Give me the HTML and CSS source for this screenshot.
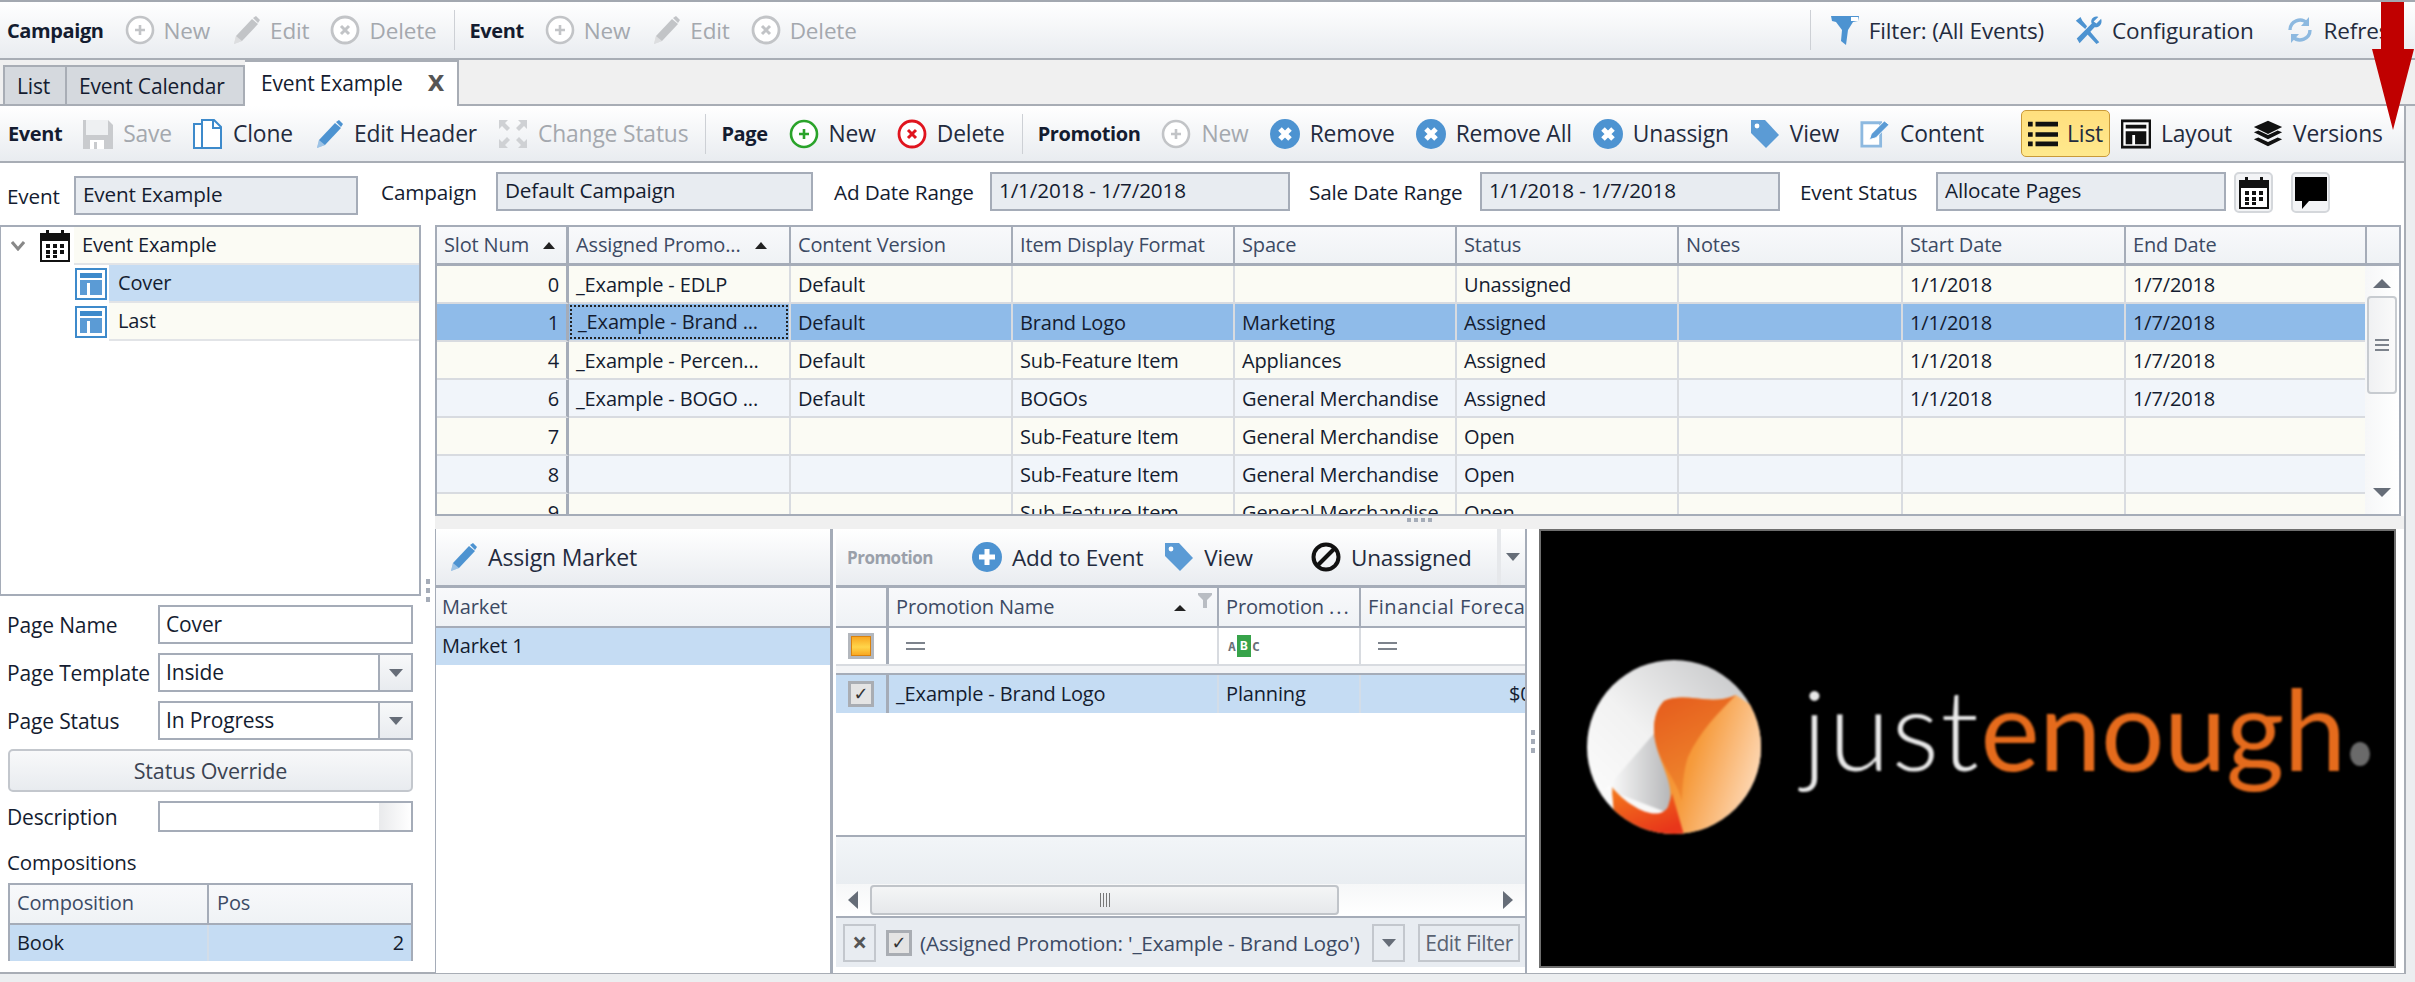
FILE: index.html
```html
<!DOCTYPE html>
<html>
<head>
<meta charset="utf-8">
<title>Event Example</title>
<link rel="stylesheet" href="styles.css">
</head>
<body>
<svg class="defs" width="0" height="0">
  <symbol id="i-plus" viewBox="0 0 30 30"><circle cx="15" cy="15" r="13" fill="#fff" stroke="currentColor" stroke-width="2.6"/><path d="M15 10v10M10 15h10" stroke="currentColor" stroke-width="2.6"/></symbol>
  <symbol id="i-x" viewBox="0 0 30 30"><circle cx="15" cy="15" r="13" fill="#fff" stroke="currentColor" stroke-width="2.8"/><path d="M11 11l8 8M19 11l-8 8" stroke="currentColor" stroke-width="3"/></symbol>
  <symbol id="i-pencil" viewBox="0 0 30 30"><path d="M3 29l2-8L21 4l6 5-16 17z" fill="currentColor"/><path d="M22 3l3-2 4 4-2 3z" fill="currentColor"/><path d="M3 29l2-8 6 5z" fill="#fff" opacity=".45"/></symbol>
  <symbol id="i-save" viewBox="0 0 30 30"><path d="M0 1h25l5 5v24H0z" fill="#c9cbce"/><rect x="3" y="1" width="22" height="15" fill="#eef0f2"/><rect x="7" y="21" width="14" height="9" fill="#fff"/><rect x="11" y="23" width="3" height="7" fill="#c9cbce"/></symbol>
  <symbol id="i-clone" viewBox="0 0 30 30"><path d="M1 5h11v24H1z" fill="#fff" stroke="#3d8acb" stroke-width="2"/><path d="M9 1h12l7 7v21H9z" fill="#fff" stroke="#3d8acb" stroke-width="2"/><path d="M20 1v8h8" fill="none" stroke="#3d8acb" stroke-width="2"/></symbol>
  <symbol id="i-expand" viewBox="0 0 30 30"><path d="M1 1h9l-3 3 5 5-3 3-5-5-3 3zM29 1v9l-3-3-5 5-3-3 5-5-3-3zM1 29v-9l3 3 5-5 3 3-5 5 3 3zM29 29h-9l3-3-5-5 3-3 5 5 3-3z" fill="#cfd1d4"/></symbol>
  <symbol id="i-xdisc" viewBox="0 0 30 30"><circle cx="15" cy="15" r="15" fill="#4d93d1"/><path d="M10 10l10 10M20 10L10 20" stroke="#fff" stroke-width="5"/></symbol>
  <symbol id="i-plusdisc" viewBox="0 0 30 30"><circle cx="15" cy="15" r="15" fill="#4d93d1"/><path d="M15 7v16M7 15h16" stroke="#fff" stroke-width="5"/></symbol>
  <symbol id="i-tag" viewBox="0 0 30 30"><path d="M1 1h14l14 15-13 13L1 14z" fill="#5b9bd5"/><circle cx="7" cy="7" r="2.4" fill="#fff"/></symbol>
  <symbol id="i-content" viewBox="0 0 32 30"><path d="M2 3h20v25H2z" fill="#fff" stroke="#8db9e0" stroke-width="3"/><path d="M10 21l2-6L26 1l5 4-14 14z" fill="#5b9bd5" stroke="#fff"/></symbol>
  <symbol id="i-list" viewBox="0 0 32 30"><path d="M0 2h5v5H0zM0 13h5v5H0zM0 23h5v5H0z" fill="#111"/><path d="M8 2h24v5H8zM8 13h24v5H8zM8 23h24v5H8z" fill="#111"/></symbol>
  <symbol id="i-layout" viewBox="0 0 32 30"><rect x="1" y="1" width="30" height="28" fill="#fff" stroke="#111" stroke-width="3"/><path d="M5 5h22v4H5zM5 12h22v4H5zM5 16h7v10H5zM15 16h12v10H15z" fill="#111"/></symbol>
  <symbol id="i-layers" viewBox="0 0 34 30"><path d="M17 0l16 7-16 8L1 7z" fill="#111"/><path d="M1 13l5-2 11 5 11-5 5 2-16 8z" fill="#111"/><path d="M1 21l5-2 11 5 11-5 5 2-16 8z" fill="#111"/></symbol>
  <symbol id="i-funnel" viewBox="0 0 28 30"><path d="M0 1h28l-1 5-5 1-5 8-2 15-5-4 1-11L5 7 1 6z" fill="#4d93d1"/><path d="M20 2h7v4h-7z" fill="#fff"/></symbol>
  <symbol id="i-wrench" viewBox="0 0 32 30"><path d="M3 5l5-4 2 4 5 6-2 3zM28 28l-3 2-12-13 3-3z" fill="#4d93d1"/><path d="M30 3l-5 5-3-2 5-5c-5-2-9 3-7 7L4 24l3 5 16-17c4 1 9-3 7-9z" fill="#4d93d1"/></symbol>
  <symbol id="i-refresh" viewBox="0 0 30 30"><path d="M5 15A10 10 0 0 1 22 8" fill="none" stroke="#8db9e0" stroke-width="3.4"/><path d="M25 15A10 10 0 0 1 8 22" fill="none" stroke="#8db9e0" stroke-width="3.4"/><path d="M24 2v9h-8zM6 28v-9h8z" fill="#8db9e0"/></symbol>
  <symbol id="i-cal" viewBox="0 0 30 32"><rect x="1" y="4" width="28" height="27" fill="#fff" stroke="#111" stroke-width="2"/><path d="M1 5h28v6H1zM6 0h3v6H6zM21 0h3v6h-3z" fill="#111"/><path d="M6 14h4v4H6zM13 14h4v4h-4zM20 14h4v4h-4zM6 20h4v4H6zM13 20h4v4h-4zM20 20h4v4h-4zM6 25h4v3H6zM13 25h4v3h-4z" fill="#111"/></symbol>
  <symbol id="i-comment" viewBox="0 0 32 32"><path d="M0 0h32v24H14l-7 8v-8H0z" fill="#000"/></symbol>
  <symbol id="i-panel" viewBox="0 0 32 32"><rect x="1" y="1" width="30" height="30" fill="#fff" stroke="#3d8acb" stroke-width="2"/><path d="M5 5h22v5H5z" fill="#3d8acb"/><path d="M5 12h22v3H5zM5 15h7v12H5zM15 15h12v12H15z" fill="#5b9bd5"/></symbol>
  <symbol id="i-ban" viewBox="0 0 30 30"><circle cx="15" cy="15" r="12.5" fill="none" stroke="#111" stroke-width="4"/><path d="M7 23L23 7" stroke="#111" stroke-width="4"/></symbol>
</svg>

<div class="arrow"><svg width="42" height="130" viewBox="0 0 42 130"><path d="M9 0h23v49h10L21 130 0 49h9z" fill="#c00000"/></svg></div>

<div class="bar topbar">
  <b class="group">Campaign</b>
  <span class="tool off"><svg class="ico"><use href="#i-plus"/></svg>New</span>
  <span class="tool off"><svg class="ico"><use href="#i-pencil"/></svg>Edit</span>
  <span class="tool off"><svg class="ico"><use href="#i-x"/></svg>Delete</span>
  <i class="sep"></i>
  <b class="group">Event</b>
  <span class="tool off"><svg class="ico"><use href="#i-plus"/></svg>New</span>
  <span class="tool off"><svg class="ico"><use href="#i-pencil"/></svg>Edit</span>
  <span class="tool off"><svg class="ico"><use href="#i-x"/></svg>Delete</span>
  <i class="sep push"></i>
  <span class="tool t-filter"><svg class="ico"><use href="#i-funnel"/></svg>Filter: (All Events)</span>
  <span class="tool t-config"><svg class="ico"><use href="#i-wrench"/></svg>Configuration</span>
  <span class="tool"><svg class="ico"><use href="#i-refresh"/></svg>Refresh</span>
</div>

<div class="tabs">
  <span class="tab tab-list">List</span>
  <span class="tab tab-cal">Event Calendar</span>
  <span class="tab tab-on">Event Example<b class="tab-x">X</b></span>
</div>

<div class="main">
  <div class="bar toolbar">
    <b class="group">Event</b>
    <span class="tool off"><svg class="ico"><use href="#i-save"/></svg>Save</span>
    <span class="tool"><svg class="ico"><use href="#i-clone"/></svg>Clone</span>
    <span class="tool blue"><svg class="ico"><use href="#i-pencil"/></svg>Edit Header</span>
    <span class="tool off"><svg class="ico"><use href="#i-expand"/></svg>Change Status</span>
    <i class="sep"></i>
    <b class="group">Page</b>
    <span class="tool green"><svg class="ico"><use href="#i-plus"/></svg>New</span>
    <span class="tool red"><svg class="ico"><use href="#i-x"/></svg>Delete</span>
    <i class="sep"></i>
    <b class="group">Promotion</b>
    <span class="tool off"><svg class="ico"><use href="#i-plus"/></svg>New</span>
    <span class="tool"><svg class="ico"><use href="#i-xdisc"/></svg>Remove</span>
    <span class="tool"><svg class="ico"><use href="#i-xdisc"/></svg>Remove All</span>
    <span class="tool"><svg class="ico"><use href="#i-xdisc"/></svg>Unassign</span>
    <span class="tool"><svg class="ico"><use href="#i-tag"/></svg>View</span>
    <span class="tool"><svg class="ico"><use href="#i-content"/></svg>Content</span>
    <span class="tool view-on"><svg class="ico"><use href="#i-list"/></svg>List</span>
    <span class="tool"><svg class="ico"><use href="#i-layout"/></svg>Layout</span>
    <span class="tool"><svg class="ico"><use href="#i-layers"/></svg>Versions</span>
  </div>

  <div class="fields">
    <label class="fld fld-event"><span class="fl-event">Event</span><span class="ro w-event">Event Example</span></label>
    <label class="fld"><span class="fl-camp">Campaign</span><span class="ro w-camp">Default Campaign</span></label>
    <label class="fld"><span class="fl-ad">Ad Date Range</span><span class="ro w-date">1/1/2018 - 1/7/2018</span></label>
    <label class="fld"><span class="fl-sale">Sale Date Range</span><span class="ro w-date">1/1/2018 - 1/7/2018</span></label>
    <label class="fld"><span class="fl-status">Event Status</span><span class="ro w-status">Allocate Pages</span></label>
    <span class="sq"><svg class="sq-ico"><use href="#i-cal"/></svg></span>
    <span class="sq sq2"><svg class="sq-ico"><use href="#i-comment"/></svg></span>
  </div>

  <div class="body">
    <div class="left">
      <div class="tree">
        <div class="node root">
          <svg class="chev" width="14" height="10" viewBox="0 0 14 10"><path d="M1 1l6 7 6-7" fill="none" stroke="#888" stroke-width="3"/></svg>
          <svg class="node-cal"><use href="#i-cal"/></svg>
          <span class="node-txt wide">Event Example</span>
        </div>
        <div class="node">
          <svg class="node-ico"><use href="#i-panel"/></svg>
          <span class="node-txt sel">Cover</span>
        </div>
        <div class="node">
          <svg class="node-ico"><use href="#i-panel"/></svg>
          <span class="node-txt">Last</span>
        </div>
      </div>
      <div class="form">
        <div class="row"><span class="lbl">Page Name</span><span class="inp">Cover</span></div>
        <div class="row"><span class="lbl">Page Template</span><span class="inp combo">Inside<i class="drop"><i class="tri"></i></i></span></div>
        <div class="row"><span class="lbl">Page Status</span><span class="inp combo">In Progress<i class="drop"><i class="tri"></i></i></span></div>
        <div class="btn">Status Override</div>
        <div class="row desc"><span class="lbl">Description</span><span class="inp"><i class="fade"></i></span></div>
        <div class="comp-title">Compositions</div>
        <div class="comp">
          <div class="comp-h"><span class="c1">Composition</span><span class="c2">Pos</span></div>
          <div class="comp-r"><span class="c1">Book</span><span class="c2 num">2</span></div>
        </div>
      </div>
    </div>
    <div class="vsplit"><i></i><i></i><i></i></div>
    <div class="right">
      <div class="slots">
        <div class="slots-scroll">
          <table class="grid">
            <colgroup><col class="s1"><col class="s2"><col class="s2"><col class="s2"><col class="s2"><col class="s2"><col class="s4"><col class="s5"><col class="s6"></colgroup>
            <thead>
              <tr><th>Slot Num<i class="sort"></i></th><th>Assigned Promo...<i class="sort"></i></th><th>Content Version</th><th>Item Display Format</th><th>Space</th><th>Status</th><th>Notes</th><th>Start Date</th><th>End Date</th></tr>
            </thead>
            <tbody>
              <tr class="a"><td class="num">0</td><td>_Example - EDLP</td><td>Default</td><td></td><td></td><td>Unassigned</td><td></td><td>1/1/2018</td><td>1/7/2018</td></tr>
              <tr class="hit"><td class="num">1</td><td class="focus"><span>_Example - Brand ...</span></td><td>Default</td><td>Brand Logo</td><td>Marketing</td><td>Assigned</td><td></td><td>1/1/2018</td><td>1/7/2018</td></tr>
              <tr class="a"><td class="num">4</td><td>_Example - Percen...</td><td>Default</td><td>Sub-Feature Item</td><td>Appliances</td><td>Assigned</td><td></td><td>1/1/2018</td><td>1/7/2018</td></tr>
              <tr class="b"><td class="num">6</td><td>_Example - BOGO ...</td><td>Default</td><td>BOGOs</td><td>General Merchandise</td><td>Assigned</td><td></td><td>1/1/2018</td><td>1/7/2018</td></tr>
              <tr class="a"><td class="num">7</td><td></td><td></td><td>Sub-Feature Item</td><td>General Merchandise</td><td>Open</td><td></td><td></td><td></td></tr>
              <tr class="b"><td class="num">8</td><td></td><td></td><td>Sub-Feature Item</td><td>General Merchandise</td><td>Open</td><td></td><td></td><td></td></tr>
              <tr class="a"><td class="num">9</td><td></td><td></td><td>Sub-Feature Item</td><td>General Merchandise</td><td>Open</td><td></td><td></td><td></td></tr>
            </tbody>
          </table>
        </div>
        <div class="vscroll">
          <div class="vscroll-head"></div>
          <i class="tri up"></i>
          <div class="vthumb"><i></i><i></i><i></i></div>
          <i class="tri down"></i>
        </div>
      </div>
      <div class="hsplit"><i></i><i></i><i></i><i></i></div>
      <div class="lower">
        <div class="market">
          <div class="bar mbar"><span class="tool blue"><svg class="ico"><use href="#i-pencil"/></svg>Assign Market</span></div>
          <div class="m-head">Market</div>
          <div class="m-row">Market 1</div>
        </div>
        <div class="promo">
          <div class="bar pbar">
            <b class="group dim">Promotion</b>
            <span class="tool"><svg class="ico"><use href="#i-plusdisc"/></svg>Add to Event</span>
            <span class="tool"><svg class="ico"><use href="#i-tag"/></svg>View</span>
            <span class="tool push-ban"><svg class="ico"><use href="#i-ban"/></svg>Unassigned</span>
            <span class="pdrop"><i class="tri"></i></span>
          </div>
          <div class="p-grid">
            <div class="p-row p-head">
              <span class="pc0"></span>
              <span class="pc1">Promotion Name<i class="sort"></i><svg class="mini-funnel" width="14" height="15" viewBox="0 0 14 15"><path d="M0 0h14v2l-5 5v8H5V7L0 2z" fill="#b9bdc3"/></svg></span>
              <span class="pc2">Promotion <i class="dots">...</i></span>
              <span class="pc3 ff">Financial Forecast</span>
            </div>
            <div class="p-row p-filter">
              <span class="pc0"><i class="cbx amber"></i></span>
              <span class="pc1"><i class="eq"></i></span>
              <span class="pc2"><i class="abc"><i>A</i><i class="abc-b">B</i><i>C</i></i></span>
              <span class="pc3"><i class="eq"></i></span>
            </div>
            <div class="p-gap"></div>
            <div class="p-row p-sel">
              <span class="pc0"><i class="cbx">&#10003;</i></span>
              <span class="pc1">_Example - Brand Logo</span>
              <span class="pc2">Planning</span>
              <span class="pc3 money">$0</span>
            </div>
            <div class="p-empty"></div>
            <div class="p-foot"></div>
            <div class="hscroll">
              <i class="tri left-t"></i>
              <div class="hthumb"><i></i><i></i><i></i><i></i></div>
              <i class="tri right-t"></i>
            </div>
            <div class="filterbar">
              <span class="fb-x">&#215;</span>
              <i class="cbx fb-c">&#10003;</i>
              <span class="fb-txt">(Assigned Promotion: '_Example - Brand Logo')</span>
              <span class="fb-d"><i class="tri"></i></span>
              <span class="fb-edit">Edit Filter</span>
            </div>
          </div>
        </div>
        <div class="vsplit v2"><i></i><i></i><i></i></div>
        <div class="logo">
          <svg class="logo-mark" width="176" height="176" viewBox="0 0 176 176">
            <defs>
              <linearGradient id="lg-w" x1="1" y1="0" x2="0" y2="1"><stop offset="0" stop-color="#bfc0c2"/><stop offset=".55" stop-color="#f2f2f2"/><stop offset="1" stop-color="#fff"/></linearGradient>
              <linearGradient id="lg-o" x1="0" y1="0" x2="1" y2=".3"><stop offset="0" stop-color="#f07a1c"/><stop offset=".6" stop-color="#f69a3a"/><stop offset="1" stop-color="#fdd3ab"/></linearGradient>
              <linearGradient id="lg-f" x1="0" y1="0" x2=".4" y2="1"><stop offset="0" stop-color="#e55a1c"/><stop offset="1" stop-color="#f08a2e"/></linearGradient>
              <linearGradient id="lg-b" x1="0" y1="0" x2=".6" y2="1"><stop offset="0" stop-color="#f47a1c"/><stop offset="1" stop-color="#e8361a"/></linearGradient>
              <linearGradient id="lg-p" x1="0" y1="0" x2="1" y2="0"><stop offset="0" stop-color="#fff"/><stop offset="1" stop-color="#b5b6b8"/></linearGradient>
              <clipPath id="lg-c"><circle cx="88" cy="88" r="87"/></clipPath>
            </defs>
            <g clip-path="url(#lg-c)">
              <rect width="176" height="176" fill="url(#lg-w)"/>
              <path d="M20 130L72 70c4 35 20 55 10 84z" fill="url(#lg-p)"/>
              <path d="M78 42c22-10 46 6 72-6l30 20v124H30l-4-48c16 20 46 36 56 16 10-24-14-48-14-78 0-12 4-22 10-28z" fill="url(#lg-o)"/>
              <path d="M78 42c22-10 46 6 72-6-18 18-36 36-48 62-4 12-6 30-6 44-6-24-28-42-28-72 0-12 4-22 10-28z" fill="url(#lg-f)"/>
              <path d="M26 128c16 20 46 36 56 20l4-14 12 42H30z" fill="url(#lg-b)"/>
            </g>
          </svg>
          <div class="logo-word"><span class="just">just</span><span class="enough">enough</span><span class="logo-dot"></span></div>
        </div>
      </div>
    </div>
  </div>
</div>
</body>
</html>
```

FILE: styles.css
```css
html, body { margin: 0; padding: 0; }
body {
  width: 2415px;
  height: 982px;
  overflow: hidden;
  position: relative;
  background: #eceef0;
  border-top: 2px solid #a3a8b0;
  box-sizing: border-box;
  font-family: "Open Sans", "Noto Sans", sans-serif;
  font-size: 20px;
  letter-spacing: -0.15px;
  color: #141c30;
}
i { font-style: normal; }
.defs { position: absolute; }
.arrow { position: absolute; right: 1px; top: -2px; z-index: 5; line-height: 0; }

/* toolbars */
.bar {
  display: flex;
  align-items: center;
  box-sizing: border-box;
  background: linear-gradient(#fff, #e9ecf0);
  white-space: nowrap;
  font-size: 22.5px;
}
.topbar { height: 58px; padding-left: 7px; border-bottom: 2px solid #a8adb5; padding-right: 12px; }
.toolbar { height: 57px; padding-left: 8px; border-bottom: 2px solid #a8adb5; font-size: 22.8px; }
.group { font-weight: 700; font-size: 20px; letter-spacing: -0.4px; margin-right: 21px; }
.group.dim { color: #9aa0aa; }
.tool { display: flex; align-items: center; gap: 10px; margin-right: 21px; color: #232b3e; }
.tool.off { color: #a4a8ae; }
.tool.off .ico { color: #c2c4c7; }
.tool .ico { color: #4d93d1; }
.tool.green .ico { color: #2aa32a; }
.tool.red .ico { color: #e0141e; }
.ico { width: 30px; height: 30px; flex: none; }
.sep { width: 1px; height: 40px; background: #cdd0d5; margin: 0 15px 0 -4px; }
.sep.push { margin-left: auto; margin-right: 19px; }
.topbar .tool:last-child { margin-right: 0; }
.topbar .tool { gap: 9px; }
.topbar .t-filter { margin-right: 29px; }
.topbar .t-config { margin-right: 31px; }
.view-on {
  height: 47px;
  box-sizing: border-box;
  margin: 0 11px 0 16px;
  padding: 0 6px;
  gap: 9px;
  border: 1px solid #c99a3a;
  border-radius: 5px;
  background: linear-gradient(#ffdf7e, #ffe98d);
}
.toolbar .tool:last-child { margin-right: 0; }

/* tabs */
.tabs {
  display: flex;
  align-items: flex-end;
  height: 46px;
  box-sizing: border-box;
  padding-left: 3px;
  background: #f0f0f0;
  border-bottom: 2px solid #a8adb5;
  font-size: 21px;
}
.tab {
  display: flex;
  align-items: center;
  box-sizing: border-box;
  height: 39px;
  background: #d5d9de;
  border: 2px solid #a8adb5;
  border-bottom: 0;
  padding-left: 12px;
}
.tab-list { width: 64px; }
.tab-cal { width: 178px; border-left: 0; }
.tab-on {
  position: relative;
  top: 2px;
  width: 214px;
  height: 46px;
  padding-left: 16px;
  padding-bottom: 2px;
  background: #fff;
  border-left: 0;
  border-top: 2px solid #a8adb5;
}
.tab-x { margin-left: 25px; font-family: "DejaVu Sans", sans-serif; font-size: 22px; color: #555; letter-spacing: 0; }

/* main panel */
.main {
  width: 2406px;
  height: 868px;
  box-sizing: border-box;
  background: #fff;
  border-right: 2px solid #a8adb5;
  border-bottom: 2px solid #a8adb5;
}
.fields { display: flex; align-items: flex-start; height: 62px; box-sizing: border-box; padding-top: 9px; padding-left: 7px; font-size: 20.7px; }
.fld { display: flex; align-items: center; margin-right: 21px; }
.fld-event { margin-top: 4px; margin-right: 23px; }
.fl-event { width: 67px; }
.fl-camp { width: 115px; }
.fl-ad { width: 156px; }
.fl-sale { width: 171px; }
.fl-status { width: 136px; }
.ro {
  display: block;
  box-sizing: border-box;
  height: 39px;
  line-height: 33px;
  padding-left: 7px;
  background: #e8ecf1;
  border: 2px solid #a5acb8;
}
.w-event { width: 284px; }
.w-camp { width: 317px; }
.w-date { width: 300px; }
.w-status { width: 290px; }
.fld:nth-of-type(3) { margin-right: 19px; }
.fld:nth-of-type(4) { margin-right: 20px; }
.sq {
  display: flex;
  align-items: center;
  justify-content: center;
  box-sizing: border-box;
  width: 39px;
  height: 41px;
  margin-left: -13px;
  border: 2px solid #d4d7db;
  border-radius: 5px;
  background: #f3f4f6;
}
.sq2 { margin-left: 18px; }
.sq-ico { width: 32px; height: 32px; }

.body { display: flex; height: 748px; }
.left { width: 421px; flex: none; }
.vsplit { width: 14px; flex: none; display: flex; flex-direction: column; justify-content: center; align-items: center; gap: 4px; background: #fff; }
.vsplit i { width: 4px; height: 5px; background: #a5acb8; }
.body > .vsplit { justify-content: flex-start; padding-top: 354px; height: 30px; }

/* tree */
.tree {
  box-sizing: border-box;
  height: 371px;
  border: 2px solid #a5acb8;
  border-left-width: 1px;
}
.node { display: flex; align-items: center; height: 38px; padding-left: 74px; position: relative; }
.node.root { padding-left: 10px; }
.chev { flex: none; margin-right: 15px; }
.node-cal { width: 30px; height: 32px; flex: none; margin-right: 4px; }
.node-ico { width: 32px; height: 32px; flex: none; margin-right: 2px; }
.node-txt { flex: 1; height: 36px; line-height: 35px; padding-left: 9px; background: #fbfbf4; border-bottom: 2px solid #e2e4e7; }
.node-txt.sel { background: #c5dcf3; }
.node-txt.wide { padding-left: 8px; }

/* page form */
.form { padding: 9px 8px 0 0; font-size: 21px; }
.row { display: flex; align-items: center; height: 39px; margin-bottom: 9px; }
.lbl { width: 151px; padding-left: 7px; flex: none; white-space: nowrap; }
.inp {
  position: relative;
  flex: 1;
  box-sizing: border-box;
  height: 39px;
  line-height: 34px;
  padding-left: 6px;
  border: 2px solid #a5acb8;
  background: #fff;
  display: block;
}
.combo { padding-right: 33px; }
.drop {
  position: absolute;
  right: 0;
  top: 0;
  bottom: 0;
  width: 33px;
  display: flex;
  align-items: center;
  justify-content: center;
  background: linear-gradient(#f8f9fa, #e8ebef);
  border-left: 2px solid #a5acb8;
  box-sizing: border-box;
}
.tri { display: block; width: 0; height: 0; border: 7px solid transparent; border-top: 8px solid #666d78; border-bottom: 0; }
.btn {
  margin: 0 0 9px 8px;
  height: 43px;
  line-height: 40px;
  box-sizing: border-box;
  text-align: center;
  color: #3b4352;
  border: 2px solid #c3c7cd;
  border-radius: 5px;
  background: linear-gradient(#f8f9fa, #e8ebef);
  font-size: 21.5px;
}
.row.desc { height: 31px; }
.desc .inp { height: 31px; }
.fade { position: absolute; right: 0; top: 0; bottom: 0; width: 32px; background: linear-gradient(90deg, #e9eaec, #fff); }
.comp-title { padding-left: 7px; height: 42px; line-height: 42px; font-size: 20.5px; }
.comp { margin-left: 8px; border: 2px solid #a5acb8; box-sizing: border-box; height: 78px; font-size: 20px; }
.comp-h { display: flex; height: 38px; line-height: 36px; background: linear-gradient(#f8f9fb, #eff2f5); border-bottom: 2px solid #a5acb8; color: #3c4a64; }
.comp-r { display: flex; height: 36px; line-height: 35px; background: #c5dcf3; }
.c1 { width: 199px; box-sizing: border-box; padding-left: 7px; border-right: 2px solid #a5acb8; }
.comp-r .c1 { border-right-color: #d3dde8; }
.c2 { flex: 1; padding-left: 8px; }
.c2.num { text-align: right; padding-right: 7px; }

/* slot grid */
.right { flex: 1; min-width: 0; }
.slots { position: relative; height: 291px; box-sizing: border-box; border: 2px solid #a5acb8; overflow: hidden; width: 1966px; }
.slots-scroll { height: 287px; overflow: hidden; }
.grid { table-layout: fixed; border-collapse: separate; border-spacing: 0; width: 1962px; }
col.s1 { width: 132px; }
col.s2 { width: 222px; }
col.s4 { width: 224px; }
col.s5 { width: 223px; }
col.s6 { width: 273px; }
.grid th {
  box-sizing: border-box;
  height: 39px;
  padding: 0 0 2px 7px;
  text-align: left;
  font-weight: 400;
  color: #3c4a64;
  white-space: nowrap;
  background: linear-gradient(#f8f9fb, #eff2f5);
  border-right: 2px solid #a5acb8;
  border-bottom: 3px solid #a5acb8;
}
.grid th:first-child { border-right-width: 3px; }
.sort { display: inline-block; width: 0; height: 0; margin-left: 14px; vertical-align: 3px; border: 6px solid transparent; border-bottom: 7px solid #222; border-top: 0; }
.grid td {
  box-sizing: border-box;
  height: 38px;
  padding: 0 0 0 7px;
  white-space: nowrap;
  overflow: hidden;
  border-right: 2px solid #d8dbe0;
  border-bottom: 2px solid #d8dbe0;
}
.grid td.num { text-align: right; padding-right: 7px; border-right: 3px solid #a5acb8; }
.a td { background: #fbfbf4; }
.b td { background: #f1f5fa; }
.hit td { background: #8fbbe9; }
.hit td.focus { padding: 0; }
.focus span { display: block; box-sizing: border-box; height: 34px; line-height: 30px; padding-left: 6px; margin: 1px; border: 2px dotted #222; }

.vscroll { position: absolute; right: 0; top: 0; bottom: 0; width: 34px; background: linear-gradient(90deg, #f6f7f8, #fff); display: flex; flex-direction: column; align-items: center; }
.vscroll-head { align-self: stretch; height: 39px; box-sizing: border-box; background: linear-gradient(#f8f9fb, #eff2f5); border-left: 2px solid #a5acb8; border-bottom: 3px solid #a5acb8; margin-bottom: 13px; flex: none; }
.tri.up { border-top: 0; border-bottom: 9px solid #666d78; border-left-width: 9px; border-right-width: 9px; }
.vthumb { box-sizing: border-box; width: 30px; height: 98px; margin-top: 8px; border: 2px solid #c7cbd0; border-radius: 4px; background: linear-gradient(90deg, #f0f1f3, #fafafa); display: flex; flex-direction: column; align-items: center; justify-content: center; gap: 3px; flex: none; }
.vthumb i { width: 14px; height: 2px; background: #7d838c; }
.tri.down { margin-top: 94px; border-top: 9px solid #666d78; border-left-width: 9px; border-right-width: 9px; }

.hsplit { height: 13px; background: #f0f0f0; display: flex; justify-content: center; gap: 3px; padding-top: 2px; box-sizing: border-box; }
.hsplit i { width: 4px; height: 4px; background: #a5acb8; }

/* lower */
.lower { display: flex; height: 444px; background: #fff; }
.market { width: 398px; flex: none; box-sizing: border-box; border-right: 3px solid #a5acb8; border-left: 1px solid #a5acb8; }
.mbar { height: 59px; padding-left: 12px; border-bottom: 3px solid #a5acb8; }
.mbar .tool { font-size: 23px; }
.m-head { height: 40px; line-height: 38px; padding-left: 6px; box-sizing: border-box; color: #3c4a64; background: linear-gradient(#f8f9fb, #eff2f5); border-bottom: 2px solid #a5acb8; }
.m-row { height: 37px; line-height: 36px; padding-left: 6px; background: #c5dcf3; }

.promo { width: 691px; flex: none; box-sizing: border-box; margin-left: 3px; overflow: hidden; border-right: 2px solid #a5acb8; }
.pbar { height: 59px; padding-left: 11px; border-bottom: 3px solid #a5acb8; position: relative; }
.pbar .group { margin-right: 39px; font-size: 17px; letter-spacing: -0.5px; }
.pbar .push-ban { margin-left: 37px; margin-right: 0; }
.pbar .tool:nth-of-type(2) { margin-left: 0; }
.pdrop { position: absolute; right: 0; top: 0; bottom: 0; width: 28px; display: flex; align-items: center; justify-content: center; border-left: 4px solid #e6e8eb; box-sizing: border-box; }
.p-grid { position: relative; height: 383px; }
.p-row { display: flex; }
.p-row > span { box-sizing: border-box; overflow: hidden; white-space: nowrap; padding-left: 7px; }
.pc0 { width: 53px; flex: none; display: flex; align-items: center; justify-content: center; padding-left: 0 !important; border-right: 3px solid #a5acb8; }
.pc1 { width: 330px; flex: none; border-right: 2px solid #d8dbe0; position: relative; }
.pc2 { width: 142px; flex: none; border-right: 2px solid #d8dbe0; }
.pc3 { flex: 1; }
.p-head { height: 40px; line-height: 38px; box-sizing: border-box; color: #3c4a64; background: linear-gradient(#f8f9fb, #eff2f5); border-bottom: 2px solid #a5acb8; }
.p-head .pc1, .p-head .pc2 { border-right: 2px solid #a5acb8; }
.p-head .sort { position: absolute; left: 285px; top: 17px; margin: 0; border-width: 0 6px 6px; border-style: solid; border-color: transparent transparent #222; }
.mini-funnel { position: absolute; left: 309px; top: 5px; }
.dots { letter-spacing: 2px; }
.ff { letter-spacing: 0.5px; }
.p-filter { height: 38px; box-sizing: border-box; border-bottom: 2px solid #d8dbe0; align-items: stretch; }
.p-filter .pc1, .p-filter .pc3 { display: flex; align-items: center; padding-left: 17px; }
.p-filter .pc2 { display: flex; align-items: center; padding-left: 8px; }
.eq { display: block; width: 19px; height: 8px; box-sizing: border-box; border-top: 2px solid #7d838c; border-bottom: 2px solid #7d838c; }
.abc { display: flex; align-items: center; font-family: "DejaVu Sans Mono", monospace; font-size: 13px; font-weight: 700; letter-spacing: 0; color: #6a7078; }
.abc i { width: 10px; text-align: center; }
.abc .abc-b { width: 14px; height: 22px; line-height: 22px; background: #37a34a; color: #fff; }
.p-gap { height: 9px; box-sizing: border-box; background: #f3f4f6; border-bottom: 2px solid #a5acb8; }
.p-sel { height: 38px; line-height: 37px; background: #c5dcf3; }
.p-sel .pc1, .p-sel .pc2 { border-right-color: #d3dde8; }
.money { padding-left: 148px !important; }
.cbx { box-sizing: border-box; display: block; width: 26px; height: 26px; text-align: center; font-size: 18px; line-height: 20px; font-weight: 700; color: #333; background: #e4e4e4; border: 3px solid #a9adb3; font-family: "DejaVu Sans", sans-serif; letter-spacing: 0; flex: none; }
.amber { background: linear-gradient(#f8a21c, #ffd54a 55%, #f8a21c); box-shadow: inset 0 0 0 1px #d9820e; border-color: #b3b7bd; }
.p-empty { height: 122px; }
.p-foot { height: 49px; border-top: 2px solid #a5acb8; box-sizing: border-box; background: linear-gradient(#f2f5f8, #e9edf1); }
.hscroll { position: relative; height: 34px; box-sizing: border-box; display: flex; align-items: center; background: linear-gradient(#f6f7f8, #fff); border-bottom: 2px solid #a5acb8; padding: 0 12px; }
.tri.left-t { border: 9px solid transparent; border-left: 0; border-right: 10px solid #666d78; }
.tri.right-t { border: 9px solid transparent; border-right: 0; border-left: 10px solid #666d78; margin-left: auto; }
.hthumb { box-sizing: border-box; width: 469px; height: 30px; margin-left: 12px; border: 2px solid #c0c4c9; border-radius: 4px; background: linear-gradient(#f4f5f6, #e6e8eb); display: flex; justify-content: center; align-items: center; gap: 2px; }
.hthumb i { width: 1px; height: 14px; background: #777; }
.filterbar { display: flex; align-items: center; height: 49px; box-sizing: border-box; background: #e8ecf1; padding-left: 7px; }
.fb-x { box-sizing: border-box; width: 33px; height: 38px; line-height: 32px; text-align: center; border: 2px solid #c3c7cd; font-size: 26px; font-weight: 700; color: #555; flex: none; }
.fb-c { margin: 0 8px 0 10px; }
.fb-txt { color: #3c4a64; font-size: 20.8px; letter-spacing: -0.2px; white-space: nowrap; width: 452px; flex: none; }
.fb-d { display: flex; align-items: center; justify-content: center; box-sizing: border-box; width: 33px; height: 38px; flex: none; border: 2px solid #c3c7cd; }
.fb-edit { box-sizing: border-box; height: 38px; line-height: 35px; margin-left: 13px; width: 102px; text-align: center; border: 2px solid #c3c7cd; color: #5a6372; font-size: 21px; white-space: nowrap; flex: none; letter-spacing: -0.4px; }

.v2 { width: 12px; padding-bottom: 20px; box-sizing: border-box; }
.logo { position: relative; width: 857px; height: 439px; flex: none; box-sizing: border-box; background: #000; border: 2px solid #6f6f6f; overflow: hidden; }
.logo-mark { position: absolute; left: 45px; top: 128px; filter: blur(1.2px); }
.logo-word { position: absolute; left: 261px; top: 122px; display: flex; font-family: "Lato", sans-serif; font-size: 112px; line-height: 150px; letter-spacing: 1.5px; filter: blur(1.2px); }
.just { color: #e8e8e8; font-weight: 300; }
.enough { color: #e56b1c; font-weight: 400; letter-spacing: -0.5px; }
.logo-dot { width: 20px; height: 24px; border-radius: 50%; background: #6a6a6a; align-self: flex-end; margin: 0 0 37px 4px; }
```
